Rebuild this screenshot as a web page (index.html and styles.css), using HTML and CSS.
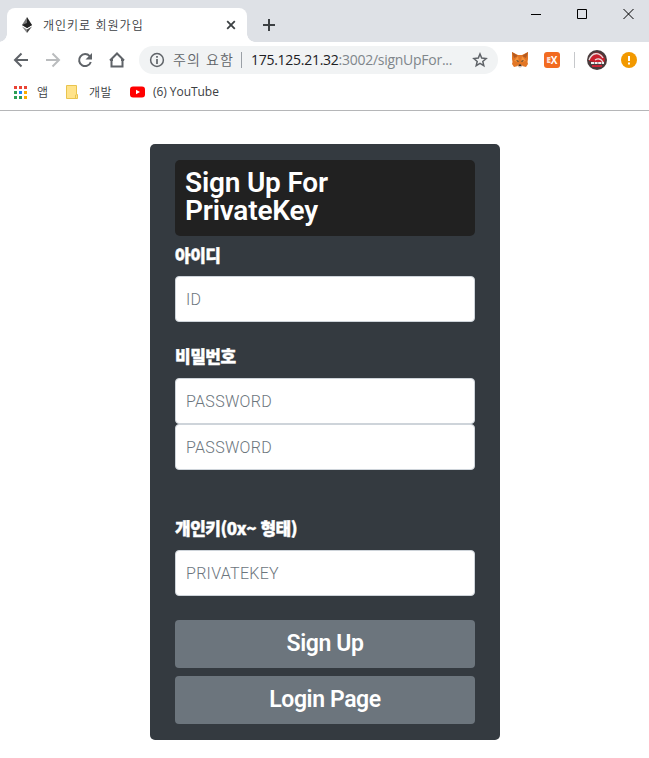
FILE: index.html
```html
<!DOCTYPE html>
<html lang="ko">
<head>
<meta charset="utf-8">
<title>개인키로 회원가입</title>
<link rel="stylesheet" href="styles.css">
</head>
<body>
<header class="browser">
  <div class="tabs">
    <div class="tab">
      <svg class="eth" width="10" height="16" viewBox="0 0 10 16"><path fill="#777" d="M5 0 0 8l5 3z"/><path fill="#222" d="m5 0 5 8-5 3z"/><path fill="#222" d="m0 8 5-2 5 2-5 3z"/><path fill="#888" d="m0 9.500 5 3V16z"/><path fill="#444" d="m10 9.500-5 3V16z"/></svg>
      <span class="tab-title">개인키로 회원가입</span>
      <svg class="close" width="10" height="10" viewBox="0 0 10 10"><path d="m1.200 1.200 7.600 7.600m0-7.600L1.200 8.800" stroke="#3c4043" stroke-width="1.800"/></svg>
    </div>
    <svg class="plus" width="12" height="12" viewBox="0 0 12 12"><path d="M6 0v12M0 6h12" stroke="#3c4043" stroke-width="2"/></svg>
    <svg class="window-controls" width="104" height="12" viewBox="0 0 104 12" fill="none" stroke="#000"><path d="M0 6.500h10M46.500 1.500h9v9h-9zM92.500 1l10 10m0-10-10 10"/></svg>
  </div>
  <div class="toolbar">
    <svg class="nav" width="112" height="16" viewBox="0 0 112 16" fill="none" stroke="#5f6368" stroke-width="2">
      <path d="M15 8H2.500M8.500 1.500 2 8l6.500 6.500"/>
      <path stroke="#babcbe" d="M33 8h12.500M39.500 1.500 46 8l-6.500 6.500"/>
      <path d="M76.700 4.200A6 6 0 1 0 77.800 10"/><path fill="#5f6368" stroke="none" d="M79 1v6.500h-6.500z"/>
      <path d="M98.500 8v6.500h11V8M97 8.500l7-7 7 7M97 8h3m8 0h3"/>
    </svg>
    <div class="address">
      <svg width="16" height="16" viewBox="0 0 16 16"><circle cx="8" cy="8" r="6.400" fill="none" stroke="#5f6368" stroke-width="1.500"/><path d="M8 7v5M8 4v1.700" stroke="#5f6368" stroke-width="1.700"/></svg>
      <span class="warning">주의 요함</span><i class="divider"></i>
      <span class="url">175.125.21.32<em>:3002/signUpFor...</em></span>
      <svg class="star" width="16" height="16" viewBox="0 0 16 16"><path d="m8 2 1.700 4.100 4.400.4-3.300 2.900 1 4.300L8 11.400l-3.800 2.300 1-4.300-3.300-2.900 4.400-.4z" fill="none" stroke="#5f6368" stroke-width="1.500"/></svg>
    </div>
    <svg class="fox" width="16" height="16" viewBox="0 0 16 16"><path fill="#e27625" d="m0 0 6 3h4l6-3v7l-.5 3 .5 2-2 3-4-1-2 1-2-1-4 1-2-3 .5-2L0 7z"/><path fill="#b45a20" d="m0 0 6 4-4 2zm16 0-6 4 4 2z"/><path fill="#f5933b" d="m6 4-4 5 5 1zm4 0 4 5-5 1z"/><path fill="#333" d="m4 8 3 1-1 1zm8 0-3 1 1 1zM6.500 14l.5-1.500h2l.5 1.500z"/><path fill="#d7c1b3" d="m5 13 2 1h2l2-1-2 2.500H7z"/></svg>
    <span class="ex"><b>E</b>X</span>
    <i class="divider extension-divider"></i>
    <svg class="avatar" width="20" height="20" viewBox="0 0 20 20"><circle cx="10" cy="10" r="10" fill="#493b3c"/><path fill="#c9202d" d="M2 11C3 1 13-1 18 9l-1 4-10-1z"/><path fill="none" stroke="#e5dddd" stroke-width="1.300" d="M2 10C5 2 12 2 16 8M8 10c3-2 6-1 8 2"/><path stroke="#eee" stroke-width="2.200" stroke-dasharray="3 .6" d="M4 13h13"/><path stroke="#c92435" stroke-width="2" d="M5 16h10"/></svg>
    <svg class="alert" width="16" height="16" viewBox="0 0 16 16"><circle cx="8" cy="8" r="8" fill="#f29900"/><path d="M8 4v5M8 10.500v2" stroke="#fff" stroke-width="2"/></svg>
  </div>
  <nav class="bookmarks">
    <svg class="apps" width="13" height="13" viewBox="0 0 13 13"><path fill="#ea4335" d="M0 0h3v3H0zm5 0h3v3H5zm5 0h3v3h-3z"/><path fill="#2b9d55" d="M0 5h3v3H0zm0 5h3v3H0zm5 0h3v3H5z"/><path fill="#1a82f7" d="M5 5h3v3H5z"/><path fill="#fbab00" d="M10 5h3v3h-3zm0 5h3v3h-3z"/></svg>
    <span class="app-label">앱</span>
    <svg class="folder" width="12" height="14" viewBox="0 0 12 14"><path fill="#ffe38a" stroke="#e9c44e" d="M.5.500h10v9h1v4H.5zM9.500 13v-3h1"/></svg>
    <span class="dev-label">개발</span>
    <svg class="youtube" width="15" height="12" viewBox="0 0 15 12"><rect width="15" height="11" y=".5" rx="3" fill="#f00"/><path fill="#fff" d="m6 3.700 4 2.300-4 2.300z"/></svg>
    <span class="yt-label">(6) YouTube</span>
  </nav>
</header>
<main class="card">
  <h1><span class="line-one">Sign Up For</span><br><span class="line-two">PrivateKey</span></h1>
  <form>
    <label class="label-id" for="id">아이디</label>
    <input id="id" placeholder="ID">
    <label class="label-password" for="password">비밀번호</label>
    <input id="password" type="password" placeholder="PASSWORD">
    <input type="password" placeholder="PASSWORD" aria-label="PASSWORD">
    <label class="label-key" for="key">개인키(0x~ 형태)</label>
    <input id="key" class="key" placeholder="PRIVATEKEY">
    <button type="button" class="signup">Sign Up</button>
    <button type="button" class="login">Login Page</button>
  </form>
</main>
</body>
</html>
```
FILE: styles.css
```css
* { box-sizing: border-box; }
body { margin: 0; background: #fff; font-family: "Open Sans", "Noto Sans CJK KR", sans-serif; }
svg { display: block; flex: none; }
.browser { height: 111px; border-bottom: 1px solid #b5b6b8; font-size: 12px; color: #3c4043; }
.tabs { display: flex; height: 42px; background: #dee1e6; }
.tab { position: relative; display: flex; align-items: center; width: 240px; height: 34px; margin: 8px 0 0 7px; padding: 0 11px 0 15px; background: #fff; border-radius: 8px 8px 0 0; }
.tab::before, .tab::after { content: ""; position: absolute; bottom: 0; width: 8px; height: 8px; }
.tab::before { left: -8px; background: radial-gradient(circle at 0 0, transparent 7.5px, #fff 8px); }
.tab::after { right: -8px; background: radial-gradient(circle at 100% 0, transparent 7.5px, #fff 8px); }
.tab-title { margin: -2px 0 0 11px; font-family: "Noto Sans CJK KR", sans-serif; font-size: 12px; font-weight: 350; letter-spacing: 1px; white-space: nowrap; }
.close { margin-left: auto; }
.plus { margin: 19px 0 0 16px; }
.window-controls { margin: 8px 14px 0 auto; }
.toolbar { display: flex; align-items: center; height: 36px; padding-left: 13px; }
.address { display: flex; align-items: center; width: 359px; height: 28px; margin-left: 14px; padding: 0 10px; border-radius: 14px; background: #f1f3f4; font-size: 14px; }
.warning { width: 61px; margin: -2px 0 0 8px; color: #5f6368; font-family: "Noto Sans CJK KR", sans-serif; font-weight: 350; letter-spacing: 1.1px; white-space: nowrap; }
.divider { flex: none; width: 1px; height: 16px; margin-left: 7px; background: #9aa0a6; }
.url { margin: -1px 0 0 9px; color: #202124; letter-spacing: -.27px; white-space: nowrap; }
.url em { color: #80868b; font-style: normal; }
.star { margin-left: auto; }
.fox { margin-left: 14px; }
.ex { width: 16px; height: 16px; margin-left: 16px; border-radius: 3px; background: #f26b21; color: #fff; font: bold 10px/15px "Open Sans", sans-serif; text-align: center; white-space: nowrap; }
.ex b { font-size: 8px; opacity: .8; vertical-align: .5px; }
.extension-divider { margin-left: 14px; background: #c6c8cb; }
.avatar { margin-left: 12px; }
.alert { margin-left: 14px; }
.bookmarks { display: flex; align-items: center; height: 28px; padding-left: 14px; }
.bookmarks span { margin-top: -2px; white-space: nowrap; }
.app-label, .dev-label { font-family: "Noto Sans CJK KR", sans-serif; font-weight: 350; }
.bookmarks .app-label { width: 12px; margin-left: 10px; }
.folder { margin-left: 17px; }
.bookmarks .dev-label { width: 24px; margin-left: 11px; letter-spacing: .5px; }
.youtube { margin-left: 17px; }
.yt-label { margin-left: 8px; letter-spacing: -.05px; }
.card { width: 350px; height: 596px; margin: 33px auto 0 150px; padding: 16px 25px; border-radius: 5px; background: #343a40; color: #fff; }
h1 { height: 76px; margin: 0; padding: 9px 10px; border-radius: 5px; background: #212121; font: 600 28px/28px Roboto, sans-serif; }
.line-one { letter-spacing: -.2px; }
.line-two { letter-spacing: -.2px; }
form { display: flex; flex-direction: column; }
label { display: block; font: 900 17px/24px "Noto Sans CJK KR", sans-serif; letter-spacing: -.5px; -webkit-text-stroke: .4px #fff; }
.label-id { height: 33px; margin-top: 7px; }
.label-password { height: 34px; margin-top: 22px; }
.label-key { height: 34px; margin-top: 46px; }
input { width: 300px; height: 46px; padding: 10px; border: 1px solid #ced4da; border-radius: 4px; background: #fff; font: 300 16px/24px Roboto, sans-serif; letter-spacing: .3px; }
input::placeholder { color: #6c757d; opacity: 1; }
button { width: 300px; height: 48px; padding: 0; border: 0; border-radius: 4px; background: #6c757d; color: #fff; font: 600 23px/46px Roboto, sans-serif; letter-spacing: -.4px; }
.signup { margin-top: 24px; }
.login { margin-top: 8px; }
```
